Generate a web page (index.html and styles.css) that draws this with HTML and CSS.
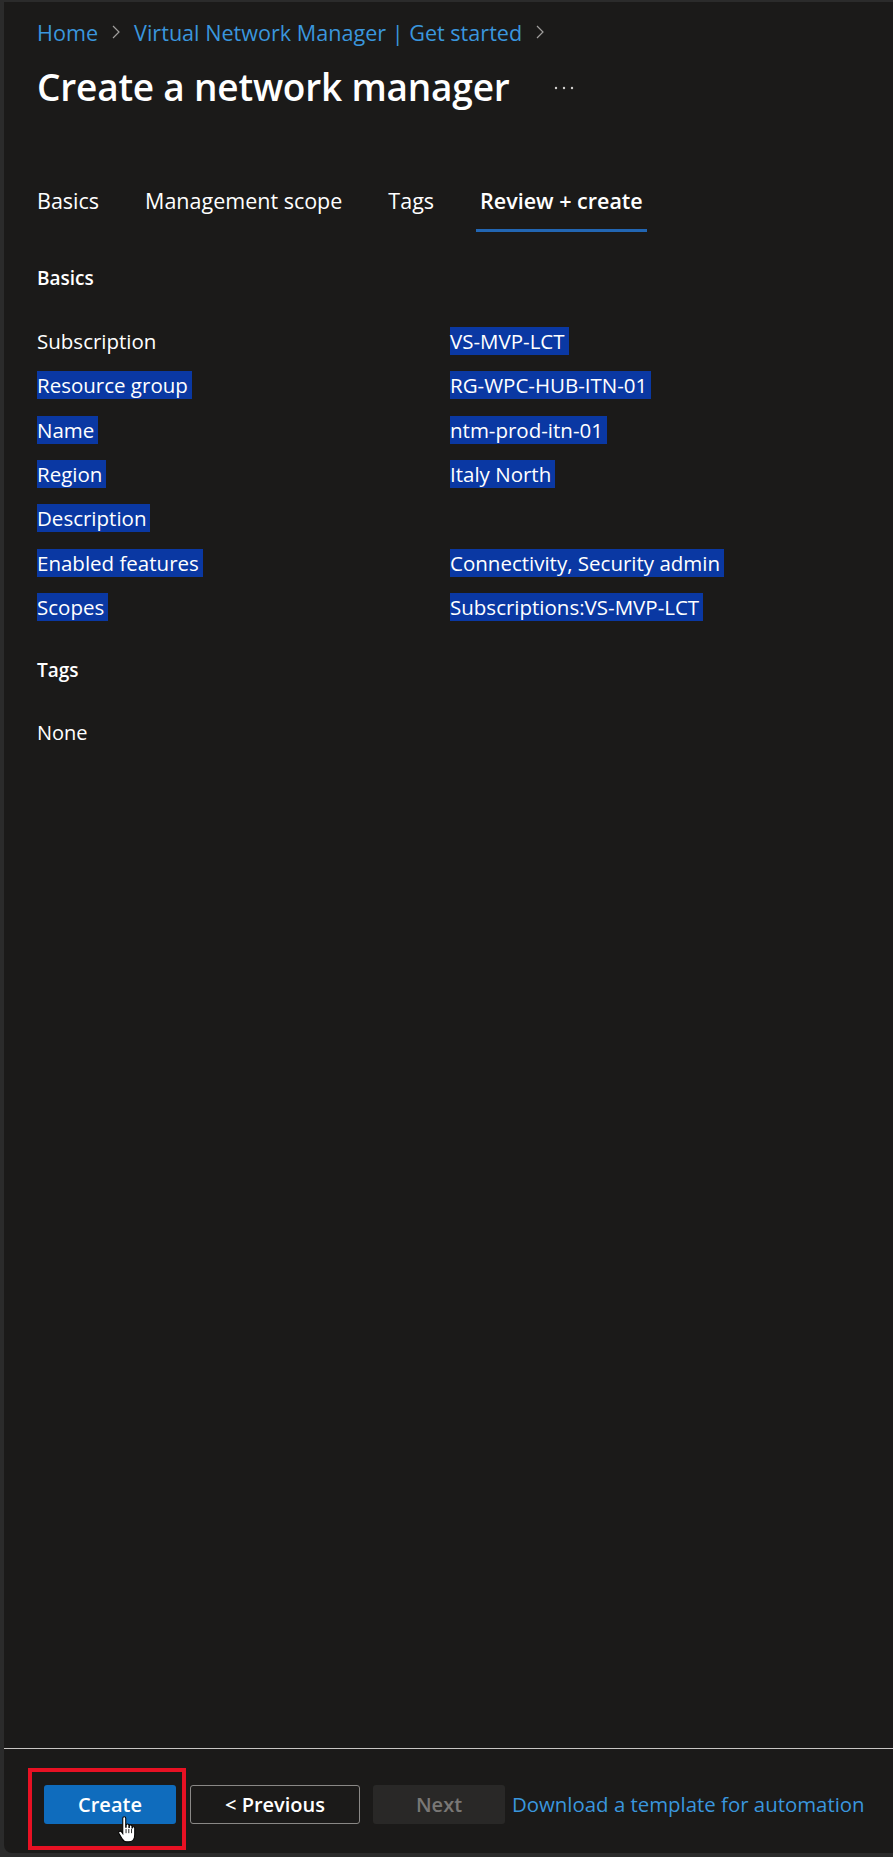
FILE: index.html
```html
<!DOCTYPE HTML>
<html>
<head>
  <title>Create a network manager</title>
  <link rel="stylesheet" href="styles.css">
</head>
<body>
  <div class="blade">
    <div class="blade-body">
      <!-- Breadcrumb -->
      <nav class="breadcrumb">
        <a href="#">Home</a>
        <svg class="chevron" width="10" height="16" viewBox="0 0 10 16"><polyline points="2,2 8,8 2,14" fill="none" stroke="#a19f9d" stroke-width="1.2"/></svg>
        <a href="#">Virtual Network Manager | Get started</a>
        <svg class="chevron" width="10" height="16" viewBox="0 0 10 16"><polyline points="2,2 8,8 2,14" fill="none" stroke="#a19f9d" stroke-width="1.2"/></svg>
      </nav>

      <div class="title-row">
        <h1>Create a network manager</h1>
        <span class="more">
          <svg width="20" height="4" viewBox="0 0 20 4"><circle cx="2" cy="2" r="1.2" fill="#d2d0ce"/><circle cx="10" cy="2" r="1.2" fill="#d2d0ce"/><circle cx="18" cy="2" r="1.2" fill="#d2d0ce"/></svg>
        </span>
      </div>

      <!-- Taburi -->
      <div class="tabs">
        <span class="tab">Basics</span>
        <span class="tab">Management scope</span>
        <span class="tab">Tags</span>
        <span class="tab active">Review + create</span>
      </div>

      <h2 class="section-title">Basics</h2>
      <div class="summary">
        <div class="label"><span>Subscription</span></div>
        <div class="value"><span class="sel">VS-MVP-LCT</span></div>
        <div class="label"><span class="sel">Resource group</span></div>
        <div class="value"><span class="sel">RG-WPC-HUB-ITN-01</span></div>
        <div class="label"><span class="sel">Name</span></div>
        <div class="value"><span class="sel">ntm-prod-itn-01</span></div>
        <div class="label"><span class="sel">Region</span></div>
        <div class="value"><span class="sel">Italy North</span></div>
        <div class="label"><span class="sel">Description</span></div>
        <div class="value"></div>
        <div class="label"><span class="sel">Enabled features</span></div>
        <div class="value"><span class="sel">Connectivity, Security admin</span></div>
        <div class="label"><span class="sel">Scopes</span></div>
        <div class="value"><span class="sel">Subscriptions:VS-MVP-LCT</span></div>
      </div>

      <h2 class="section-title tags-title">Tags</h2>
      <p class="none">None</p>
    </div>

    <div class="blade-footer">
      <span class="create-wrap">
        <button class="btn btn-primary">Create</button>
        <span class="highlight-box"></span>
        <svg class="hand" width="18" height="28" viewBox="0 0 17 26"><path d="M4.5 2c0-.9.6-1.5 1.4-1.5S7.3 1.1 7.3 2v8.3h.4V8.6c0-.8.6-1.3 1.3-1.3s1.3.5 1.3 1.3v2h.4V9.4c0-.7.6-1.2 1.2-1.2s1.3.5 1.3 1.2v1.6h.3c0-.7.5-1.1 1.1-1.1s1.2.4 1.2 1.1v6.2c0 4-2.200 7-5.8 7H8.3c-2 0-3.3-1-4.4-2.8L.9 16.3c-.5-.8-.2-1.6.5-2s1.5-.2 2 .5l1.1 1.6V2z" fill="#fff" stroke="#000" stroke-width="1"/><path d="M7.6 12v4M10.2 12v4M12.8 12v4" stroke="#000" stroke-width=".8"/></svg>
      </span>
      <button class="btn btn-outline">&lt; Previous</button>
      <button class="btn btn-disabled">Next</button>
      <a class="footer-link" href="#">Download a template for automation</a>
    </div>
  </div>
</body>
</html>
```

FILE: styles.css
```css
body {
  margin: 0;
  background-color: #2b2b2b;
  font-family: "Open Sans", "Noto Sans", sans-serif;
  color: #ffffff;
}

.blade {
  display: flex;
  flex-direction: column;
  height: calc(100vh - 6px);
  margin: 2px 0 4px 4px;
  background-color: #1b1a19;
  border-bottom-left-radius: 8px;
}

.blade-body {
  flex: 1;
  padding: 16px 0 0 33px;
}

/* Breadcrumb */
.breadcrumb {
  display: flex;
  align-items: center;
  gap: 10px;
  height: 28px;
  font-size: 21.6px;
}

.breadcrumb a {
  color: #3a96dd;
  text-decoration: none;
}

.chevron {
  margin: 0 3px;
}

.title-row {
  display: flex;
  align-items: center;
  margin-top: 16px;
  height: 48px;
}

h1 {
  margin: 0;
  font-size: 37px;
  font-weight: 600;
  letter-spacing: -0.2px;
}

.more {
  display: flex;
  margin-left: 44px;
  margin-top: 4px;
}

/* Taburi */
.tabs {
  display: flex;
  gap: 38px;
  margin: 67px 0 0 -4px;
}

.tab {
  padding: 10px 4px 14px;
  border-bottom: 3px solid transparent;
  font-size: 21.5px;
  line-height: 28px;
}

.tab.active {
  font-weight: 600;
  border-bottom-color: #2266b3;
}

.section-title {
  margin: 32px 0 0;
  font-size: 19px;
  font-weight: 600;
  line-height: 28px;
}

.summary {
  display: grid;
  grid-template-columns: 413px 1fr;
  grid-auto-rows: 44.3px;
  margin-top: 27px;
  font-size: 20.5px;
}

.summary div {
  display: flex;
  align-items: center;
}

.sel {
  display: inline-block;
  line-height: 28px;
  padding-right: 4px;
  background-color: #0a38a3;
}

.tags-title {
  margin-top: 27px;
}

.none {
  margin: 35px 0 0;
  font-size: 20px;
  line-height: 28px;
}

/* Footer */
.blade-footer {
  display: flex;
  align-items: center;
  height: 98px;
  padding: 6px 0 0 40px;
  border-top: 1px solid #c8c6c4;
}

.create-wrap {
  position: relative;
  display: flex;
  margin-right: 14px;
}

.btn {
  height: 39px;
  border-radius: 3px;
  font-family: "Open Sans", "Noto Sans", sans-serif;
  font-size: 20px;
  font-weight: 600;
  cursor: pointer;
}

.btn-primary {
  width: 132px;
  background-color: #0f6cbd;
  color: #ffffff;
  border: none;
}

.btn-outline {
  width: 170px;
  margin-right: 13px;
  background-color: transparent;
  color: #ffffff;
  border: 1px solid #8a8886;
}

.btn-disabled {
  width: 132px;
  margin-right: 7px;
  background-color: #292827;
  color: #797775;
  border: none;
}

.footer-link {
  color: #3a96dd;
  text-decoration: none;
  font-size: 20.4px;
}

.highlight-box {
  position: absolute;
  left: -16px;
  top: -17px;
  right: -10px;
  bottom: -26px;
  border: 4px solid #e81123;
}

.hand {
  position: absolute;
  left: 74px;
  top: 31px;
}
```
